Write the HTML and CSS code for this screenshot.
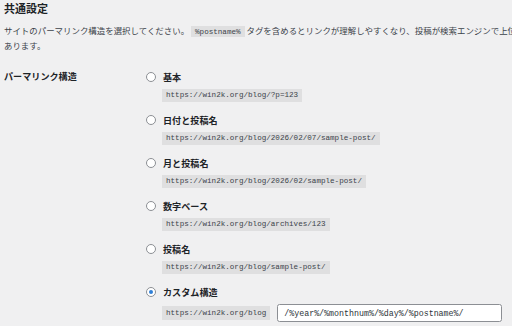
FILE: index.html
```html
<!DOCTYPE html>
<html lang="ja">
<head>
    <meta charset="UTF-8">
    <meta name="viewport" content="width=device-width, initial-scale=1.0">
    <title>パーマリンク設定</title>
    <link rel="stylesheet" href="styles.css">
</head>
<body>
    <div class="wrap">
        <h2 class="title">共通設定</h2>
        <p class="intro">サイトのパーマリンク構造を選択してください。 <code>%postname%</code> タグを含めるとリンクが理解しやすくなり、投稿が検索エンジンで上位に表示される可能性があります。</p>

        <div class="form-row">
            <div class="row-label">パーマリンク構造</div>
            <div class="options">
                <div class="option">
                    <label class="choice"><input type="radio" name="structure"> 基本</label>
                    <div class="sample"><code>https://win2k.org/blog/?p=123</code></div>
                </div>
                <div class="option">
                    <label class="choice"><input type="radio" name="structure"> 日付と投稿名</label>
                    <div class="sample"><code>https://win2k.org/blog/2026/02/07/sample-post/</code></div>
                </div>
                <div class="option">
                    <label class="choice"><input type="radio" name="structure"> 月と投稿名</label>
                    <div class="sample"><code>https://win2k.org/blog/2026/02/sample-post/</code></div>
                </div>
                <div class="option">
                    <label class="choice"><input type="radio" name="structure"> 数字ベース</label>
                    <div class="sample"><code>https://win2k.org/blog/archives/123</code></div>
                </div>
                <div class="option">
                    <label class="choice"><input type="radio" name="structure"> 投稿名</label>
                    <div class="sample"><code>https://win2k.org/blog/sample-post/</code></div>
                </div>
                <div class="option">
                    <label class="choice"><input type="radio" name="structure" checked> カスタム構造</label>
                    <div class="sample custom">
                        <code>https://win2k.org/blog</code>
                        <input type="text" class="structure-input" value="/%year%/%monthnum%/%day%/%postname%/">
                    </div>
                </div>
            </div>
        </div>
    </div>
</body>
</html>
```

FILE: styles.css
```css
html, body {
    margin: 0;
    overflow: hidden;
}
body {
    font-family: "Noto Sans CJK JP", "Noto Sans", sans-serif;
    font-size: 8.45px;
    color: #3c434a;
    background-color: #f0f0f1;
}
.wrap {
    width: 597px;
    padding: 2px 0 0 4px;
}
.title {
    margin: 0;
    font-size: 11px;
    line-height: 12px;
    font-weight: 700;
    color: #1d2327;
}
.intro {
    margin: 10px 0 0;
    line-height: 13px;
}
code {
    font-family: "Liberation Mono", "DejaVu Sans Mono", monospace;
    font-size: 7.6px;
    background-color: rgba(0,0,0,0.07);
    padding: 2px 4px 1px;
    color: #3c434a;
}
.form-row {
    display: flex;
    margin-top: 19px;
}
.row-label {
    width: 142px;
    flex-shrink: 0;
    line-height: 10px;
    font-size: 9.1px;
    font-weight: 700;
    color: #1d2327;
}
.option {
    margin-bottom: 12.5px;
}
.choice {
    display: flex;
    align-items: center;
    gap: 7px;
    height: 12px;
    font-size: 9.1px;
    font-weight: 700;
    color: #1d2327;
}
.choice input {
    appearance: none;
    margin: 0;
    width: 10px;
    height: 10px;
    border: 1px solid #8c8f94;
    border-radius: 50%;
    background-color: #fff;
    box-sizing: border-box;
    display: grid;
    place-items: center;
}
.choice input:checked::before {
    content: "";
    width: 4px;
    height: 4px;
    border-radius: 50%;
    background-color: #2f7fd6;
}
.sample {
    display: flex;
    margin-top: 5.5px;
    padding-left: 16px;
}
.sample code {
    line-height: 13px;
    padding: 0 4px;
}
.custom {
    align-items: center;
    gap: 7px;
    margin-top: 6px;
}
.custom code {
    line-height: 14px;
}
.structure-input {
    width: 225px;
    height: 18px;
    box-sizing: border-box;
    margin: 0;
    padding: 0 6px;
    border: 1px solid #8c8f94;
    border-radius: 2.5px;
    background-color: #fff;
    font-family: "Liberation Mono", "DejaVu Sans Mono", monospace;
    font-size: 8.3px;
    color: #2c3338;
}
```
